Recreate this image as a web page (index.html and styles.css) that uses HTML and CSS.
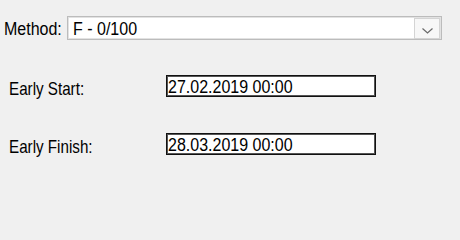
FILE: index.html
```html
<!DOCTYPE html>
<html>
<head>
<meta charset="utf-8">
<link rel="stylesheet" href="styles.css">
</head>
<body>
<div class="form">
  <div class="method-row">
    <span class="label label-method"><span class="txt">Method:</span></span>
    <div class="combo">
      <span class="combo-text"><span class="txt">F - 0/100</span></span>
      <span class="combo-btn">
        <svg width="11" height="6" viewBox="0 0 11 6"><polyline points="0.5,0.5 5.5,5 10.5,0.5" fill="none" stroke="#6a6a6a" stroke-width="1.2"/></svg>
      </span>
    </div>
  </div>
  <div class="date-row first">
    <span class="label date-label"><span class="txt">Early Start:</span></span>
    <div class="date-box"><span class="txt">27.02.2019 00:00</span></div>
  </div>
  <div class="date-row second">
    <span class="label date-label"><span class="txt">Early Finish:</span></span>
    <div class="date-box"><span class="txt">28.03.2019 00:00</span></div>
  </div>
</div>
</body>
</html>
```
FILE: styles.css
```css
html, body {
  margin: 0;
  padding: 0;
  background: #f0f0f0;
  width: 460px;
  height: 207px;
  overflow: hidden;
}
body {
  font-family: "Liberation Sans", Arial, sans-serif;
  font-size: 16px;
  color: #000;
}
.form {
  display: flex;
  flex-direction: column;
  padding: 16px 0 0 4px;
}
.txt {
  display: inline-block;
  transform: scaleY(1.15);
  line-height: 1;
  white-space: nowrap;
}
.method-row {
  display: flex;
  align-items: center;
  height: 24px;
}
.label-method {
  width: 63px;
  padding-top: 2px;
}
.combo {
  box-sizing: border-box;
  width: 375px;
  height: 24px;
  border: 1px solid #bcbcbc;
  box-shadow: inset 0 0 0 1px #e2e2e2;
  background: #fff;
  display: flex;
  align-items: center;
}
.combo-text {
  flex: 1;
  padding-left: 5px;
  padding-top: 1px;
}
.combo-btn {
  box-sizing: border-box;
  width: 26px;
  height: 21px;
  margin: 1px 1px 0 0;
  align-self: flex-start;
  border: 1px solid #d4d4d4;
  background: #f7f7f7;
  display: flex;
  justify-content: center;
  align-items: flex-end;
  padding-bottom: 4px;
}
.combo-btn svg {
  display: block;
}
.date-row {
  display: flex;
  align-items: center;
  height: 22px;
  padding-left: 5px;
}
.date-row.first {
  margin-top: 35px;
}
.date-row.second {
  margin-top: 36px;
}
.date-label {
  width: 157px;
  padding-top: 4px;
  font-size: 15.2px;
}
.date-label .txt {
  transform: scaleY(1.22);
}
.date-box {
  box-sizing: border-box;
  width: 210px;
  height: 22px;
  border: 1px solid #111;
  box-shadow: inset 0 0 0 1px #555;
  background: #fff;
  display: flex;
  align-items: center;
  padding-left: 1px;
  padding-top: 1px;
}
```
